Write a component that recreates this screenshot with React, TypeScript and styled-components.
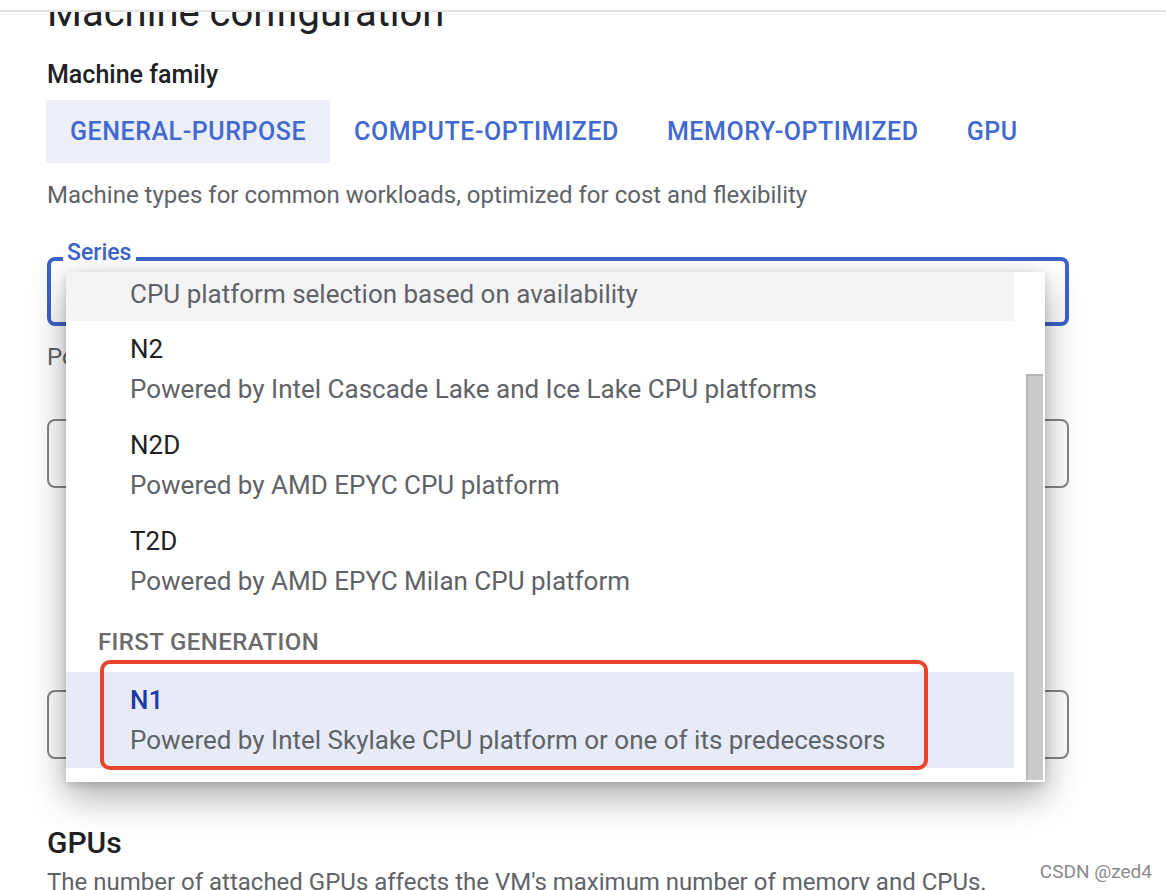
import React from 'react';
import styled, {createGlobalStyle} from 'styled-components';

const GlobalStyle = createGlobalStyle`
  html, body {
    margin: 0;
    padding: 0;
    background: #fff;
  }
  body {
    font-family: Roboto, "Liberation Sans", Arial, sans-serif;
    color: #202124;
    overflow: hidden;
  }
`;

const families = ['GENERAL-PURPOSE', 'COMPUTE-OPTIMIZED', 'MEMORY-OPTIMIZED', 'GPU'];

const series = [
    {name: 'N2', desc: 'Powered by Intel Cascade Lake and Ice Lake CPU platforms'},
    {name: 'N2D', desc: 'Powered by AMD EPYC CPU platform'},
    {name: 'T2D', desc: 'Powered by AMD EPYC Milan CPU platform'},
];

const App = () => {
    return <Page>
        <GlobalStyle/>
        <TopBar/>
        <Content>
            <PageTitle>Machine configuration</PageTitle>

            <Label>Machine family</Label>
            <Tabs>
                {families.map((f, i) => <Tab key={f} active={i === 0}>{f}</Tab>)}
            </Tabs>
            <Hint>Machine types for common workloads, optimized for cost and flexibility</Hint>

            <SeriesField>
                <FieldLabel>Series</FieldLabel>

                <Menu>
                    <MenuList>
                        <TopItem>CPU platform selection based on availability</TopItem>
                        {series.map(s => <Item key={s.name}>
                            <ItemTitle>{s.name}</ItemTitle>
                            <ItemDesc>{s.desc}</ItemDesc>
                        </Item>)}
                        <GroupHeader>FIRST GENERATION</GroupHeader>
                        <Item selected>
                            <ItemTitle selected>N1</ItemTitle>
                            <ItemDesc>Powered by Intel Skylake CPU platform or one of its predecessors</ItemDesc>
                        </Item>
                    </MenuList>
                    <ScrollTrack>
                        <ScrollThumb/>
                    </ScrollTrack>
                    <Highlight/>
                </Menu>
            </SeriesField>

            <Hint className="helper">Powered by Intel Cascade Lake and Ice Lake CPU platforms</Hint>
            <Outlined/>
            <Outlined className="second"/>

            <SectionTitle>GPUs</SectionTitle>
            <Hint className="last">The number of attached GPUs affects the VM's maximum number of memory and CPUs.</Hint>
        </Content>
        <Watermark>CSDN @zed4</Watermark>
    </Page>;
};

export default App;


const Page = styled.div`
  position: relative;
  width: 1166px;
  height: 890px;
  overflow: hidden;
`;

const TopBar = styled.div`
  height: 10px;
  border-bottom: 2px solid #e3e3e3;
  background: #fff;
  position: relative;
  z-index: 2;
`;

const Content = styled.div`
  padding: 0 97px 0 47px;
  display: flex;
  flex-direction: column;
`;

const PageTitle = styled.h1`
  margin: -25px 0 0;
  font-size: 40px;
  line-height: 52px;
  font-weight: 400;
  white-space: nowrap;
  color: #202124;
`;

const Label = styled.div`
  margin-top: 20px;
  font-size: 25px;
  line-height: 32px;
  font-weight: 500;
  color: #202124;
`;

const Tabs = styled.div`
  display: flex;
  margin-top: 9px;
  margin-left: -1px;
`;

const Tab = styled.div<{active?: boolean}>`
  height: 63px;
  padding: 0 24px;
  display: flex;
  align-items: center;
  font-size: 25px;
  font-weight: 500;
  letter-spacing: 0.55px;
  color: #4169cf;
  border-radius: 3px;
  background: ${p => p.active ? '#eceef8' : 'transparent'};
`;

const Hint = styled.div`
  font-size: 24px;
  line-height: 32px;
  color: #5f6368;
  margin-top: 16px;
  white-space: nowrap;

  &.helper {
    margin-top: 15px;
  }

  &.last {
    margin-top: 5px;
  }
`;

const SeriesField = styled.div`
  position: relative;
  margin-top: 46px;
  height: 69px;
  border: 4px solid #3c63c9;
  border-radius: 8px;
  box-sizing: border-box;
`;

const FieldLabel = styled.div`
  position: absolute;
  left: 12px;
  top: -22px;
  padding: 0 5px 0 4px;
  background: #fff;
  font-size: 23px;
  line-height: 28px;
  font-weight: 500;
  color: #3c63c9;
`;

const Menu = styled.div`
  position: absolute;
  left: 15px;
  top: 11px;
  width: 979px;
  height: 510px;
  background: #fff;
  display: flex;
  z-index: 3;
  box-shadow: 0 14px 34px rgba(0, 0, 0, 0.34), 0 2px 8px rgba(0, 0, 0, 0.14);
`;

const MenuList = styled.div`
  flex: 1;
  display: flex;
  flex-direction: column;
`;

const TopItem = styled.div`
  height: 49px;
  padding-left: 64px;
  display: flex;
  align-items: center;
  padding-bottom: 6px;
  box-sizing: border-box;
  background: #f4f4f4;
  font-size: 26px;
  color: #5f6368;
  white-space: nowrap;
`;

const Item = styled.div<{selected?: boolean}>`
  height: 96px;
  padding: 12px 0 12px 64px;
  box-sizing: border-box;
  display: flex;
  flex-direction: column;
  gap: 8px;
  background: ${p => p.selected ? '#e6ebf7' : '#fff'};
`;

const ItemTitle = styled.div<{selected?: boolean}>`
  font-size: 26px;
  line-height: 32px;
  font-weight: ${p => p.selected ? 500 : 400};
  color: ${p => p.selected ? '#1d3ba8' : '#202124'};
`;

const ItemDesc = styled.div`
  font-size: 26px;
  line-height: 32px;
  color: #5f6368;
  white-space: nowrap;
`;

const GroupHeader = styled.div`
  height: 63px;
  padding: 2px 0 0 32px;
  box-sizing: border-box;
  display: flex;
  align-items: center;
  font-size: 24px;
  font-weight: 500;
  letter-spacing: 0.4px;
  color: #6b6b6b;
`;

const ScrollTrack = styled.div`
  width: 31px;
  display: flex;
  justify-content: flex-end;
  padding: 102px 2px 2px 0;
  box-sizing: border-box;
`;

const ScrollThumb = styled.div`
  width: 17px;
  height: 100%;
  box-sizing: border-box;
  background: #cacaca;
  border-left: 2px solid #b5b5b5;
  border-top: 2px solid #b5b5b5;
`;

const Highlight = styled.div`
  position: absolute;
  left: 34px;
  top: 388px;
  width: 828px;
  height: 110px;
  box-sizing: border-box;
  border: 4px solid #e8432d;
  border-radius: 10px;
  pointer-events: none;
`;

const Outlined = styled.div`
  margin-top: 46px;
  height: 69px;
  border: 2px solid #80868b;
  border-radius: 8px;
  box-sizing: border-box;

  &.second {
    margin-top: 202px;
  }
`;

const SectionTitle = styled.div`
  margin-top: 66px;
  font-size: 30px;
  line-height: 36px;
  font-weight: 500;
  color: #202124;
`;

const Watermark = styled.div`
  position: absolute;
  right: 14px;
  bottom: 7px;
  font-size: 19px;
  color: #8a8a8a;
`;
